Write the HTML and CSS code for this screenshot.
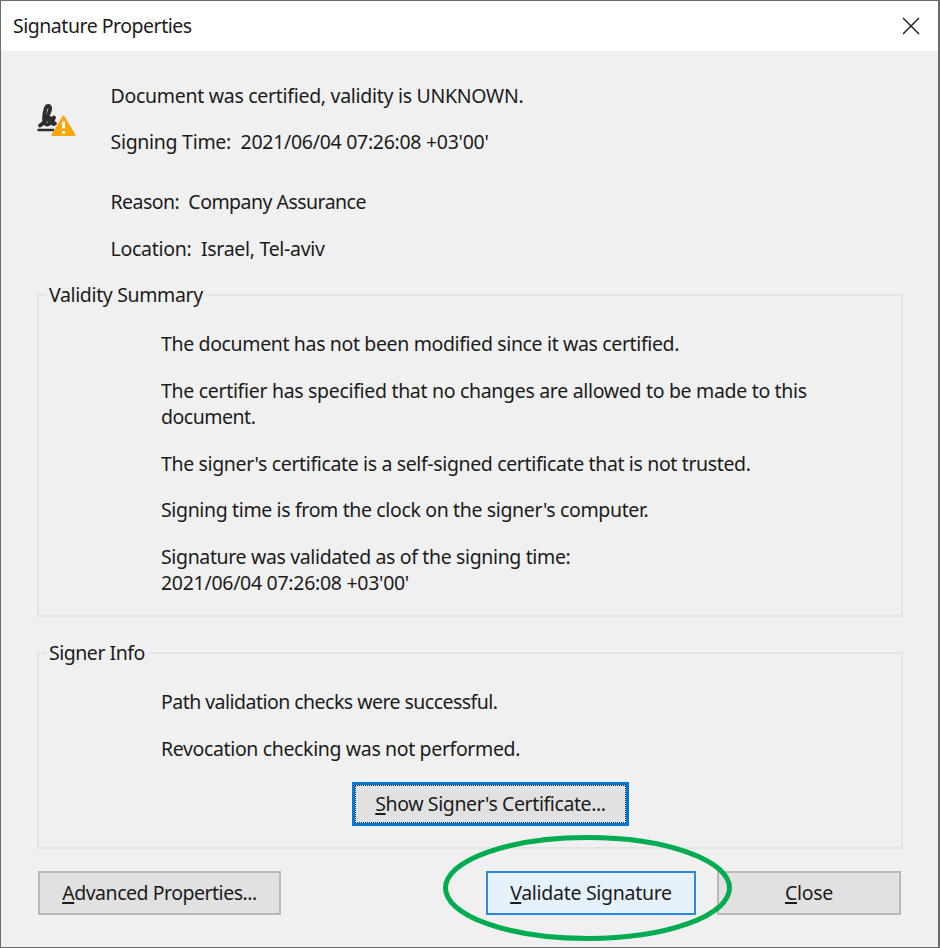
FILE: index.html
```html
<!DOCTYPE html>
<html lang="en">
<head>
<meta charset="utf-8">
<title>Signature Properties</title>
<link rel="stylesheet" href="styles.css">
</head>
<body>
<main class="dialog">
  <header class="titlebar">
    <h1 class="tight">Signature Properties</h1>
    <button class="dismiss" aria-label="Close dialog"><svg width="18" height="18" viewBox="0 0 18 18"><path d="M1 1 17 17M17 1 1 17"/></svg></button>
  </header>
  <section class="summary">
    <svg class="sigicon" width="40" height="36" viewBox="0 0 40 36">
      <path class="pen" d="M3 22.500C7 21 11.500 12 13 7C14 2 10 1.500 8.500 6C7 11.500 6.500 17 8 20C9.500 23.500 14 20.500 14 17C14 14 10.500 14.500 11 16.500C12 19 15.500 18 17 14.500C15 19 15 22.500 18 20.500"/>
      <path class="rule" d="M0.500 27H17"/>
      <path class="tri" d="M26.500 13.500 37.500 32H15.500Z"/>
      <path class="mark" d="M26.500 18.500V25.500M26.500 28V30.500"/>
    </svg>
    <div class="lines">
      <p class="loose">Document was certified, validity is UNKNOWN.</p>
      <p class="loose">Signing Time:&nbsp; 2021/06/04 07:26:08 +03'00'</p>
      <p class="reason tighter">Reason:&nbsp; Company Assurance</p>
      <p class="loose">Location:&nbsp; Israel, Tel-aviv</p>
    </div>
  </section>
  <section class="group validity">
    <h2>Validity Summary</h2>
    <p>The document has not been modified since it was certified.</p>
    <p><span class="wide">The certifier has specified that no changes are allowed to be made to this</span><br><span class="tight">document.</span></p>
    <p>The signer's certificate is a self-signed certificate that is not trusted.</p>
    <p>Signing time is from the clock on the signer's computer.</p>
    <p>Signature was validated as of the signing time:<br><span class="loose">2021/06/04 07:26:08 +03'00'</span></p>
  </section>
  <section class="group signer">
    <h2 class="tight">Signer Info</h2>
    <p class="tighter">Path validation checks were successful.</p>
    <p>Revocation checking was not performed.</p>
    <button class="btn show"><span><u>S</u>how Signer's Certificate...</span></button>
  </section>
  <footer class="actions">
    <button class="btn advanced tight"><span><u>A</u>dvanced Properties...</span></button>
    <div class="validate-wrap">
      <button class="btn validate loose"><span><u>V</u>alidate Signature</span></button>
      <svg class="ring" width="290" height="106" viewBox="0 0 290 106"><ellipse cx="145.500" cy="53" rx="142" ry="50.500"/></svg>
    </div>
    <button class="btn close loose"><span><u>C</u>lose</span></button>
  </footer>
</main>
</body>
</html>
```
FILE: styles.css
```css
* { box-sizing: border-box; }
body { margin: 0; font: 19.5px/26.5px "Noto Sans", "Open Sans", sans-serif; letter-spacing: -0.36px; color: #1b1b1b; }
h1, h2, p { margin: 0; font-size: inherit; font-weight: 400; white-space: nowrap; }
button { font: inherit; color: inherit; letter-spacing: -0.4px; padding: 0; }
.wide { letter-spacing: -0.315px; }
.loose { letter-spacing: -0.29px; }
.tight { letter-spacing: -0.48px; }
.tighter { letter-spacing: -0.53px; }
.dialog { width: 940px; height: 948px; background: #f0f0f0; border: 1px solid #6b6b6b; border-right-width: 2px; }
.titlebar { height: 50px; background: #fff; display: flex; align-items: center; justify-content: space-between; padding: 0 17px 0 12px; }
.dismiss { border: 0; background: none; width: 20px; height: 20px; display: grid; place-items: center; }
.dismiss path { stroke: #222; stroke-width: 1.5; fill: none; }
.summary { display: flex; padding: 31.5px 0 0 36px; height: 243px; }
.sigicon { margin-top: 20px; flex: none; }
.pen { fill: none; stroke: #2d2d2d; stroke-width: 3.8; stroke-linecap: round; stroke-linejoin: round; }
.rule { stroke: #2d2d2d; stroke-width: 2.5; }
.tri { fill: #f7a60b; stroke: #f7a60b; stroke-width: 2; stroke-linejoin: round; }
.mark { stroke: #fff; stroke-width: 2.8; }
.lines { margin-left: 33.5px; }
.lines p + p { margin-top: 20px; }
.lines .reason { margin-top: 33.5px; }
.group { margin-left: 36px; width: 866px; border: 2px solid #e3e3e3; padding-left: 122px; }
.group h2 { display: table; margin: -14px 0 22.5px -115px; padding: 0 3px; background: #f0f0f0; }
.group p + p { margin-top: 20px; }
.validity { height: 323px; }
.signer { height: 197px; margin-top: 35px; }
.btn { display: flex; align-items: center; justify-content: center; height: 44px; background: #e1e1e1; border: 2px solid #b9b9b9; white-space: nowrap; }
.btn span { padding-top: 1px; }
.btn u { text-underline-offset: 2px; text-decoration-thickness: 2px; }
.show { width: 277px; margin: 20px 0 0 191px; border: 3px solid #0078d7; outline: 1px dotted #222; outline-offset: -4px; }
.actions { display: flex; margin: 22px 0 0 37px; width: 863px; }
.advanced { width: 243px; }
.validate-wrap { position: relative; margin-left: 205px; }
.validate { width: 210px; background: #e5f1fb; border-color: #2b8add; }
.close { width: 184px; margin-left: auto; }
.ring { position: absolute; left: -44px; top: -36px; z-index: 1; fill: none; stroke: #00ac4f; stroke-width: 5; pointer-events: none; }
```
